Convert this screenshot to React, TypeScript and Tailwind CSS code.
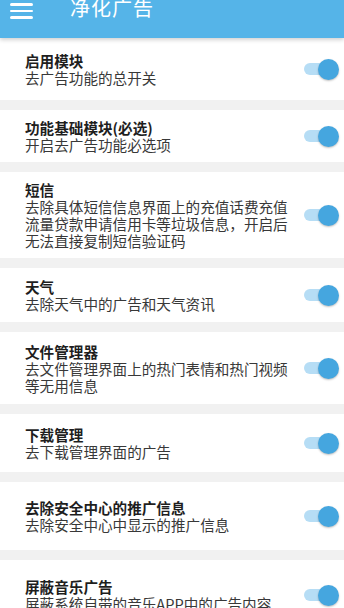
import React from 'react';

type Item = { title: string; desc: string[]; h: string };

const items: Item[] = [
  { title: '启用模块', desc: ['去广告功能的总开关'], h: 'h-[62px]' },
  { title: '功能基础模块(必选)', desc: ['开启去广告功能必选项'], h: 'h-[52px]' },
  {
    title: '短信',
    desc: ['去除具体短信信息界面上的充值话费充值', '流量贷款申请信用卡等垃圾信息，开启后', '无法直接复制短信验证码'],
    h: 'h-[86px]',
  },
  { title: '天气', desc: ['去除天气中的广告和天气资讯'], h: 'h-[54px]' },
  { title: '文件管理器', desc: ['去文件管理界面上的热门表情和热门视频', '等无用信息'], h: 'h-[72px]' },
  { title: '下载管理', desc: ['去下载管理界面的广告'], h: 'h-[58px]' },
  { title: '去除安全中心的推广信息', desc: ['去除安全中心中显示的推广信息'], h: 'h-[68px]' },
  { title: '屏蔽音乐广告', desc: ['屏蔽系统自带的音乐APP中的广告内容'], h: 'h-[70px]' },
];

function Toggle() {
  return (
    <div className="relative w-[35px] h-[22px] shrink-0 flex items-center">
      <div className="absolute left-0 right-[6px] h-[12px] rounded-full bg-[#b6ddf5]" />
      <div className="absolute right-0 w-[21px] h-[21px] rounded-full bg-[#45a6df] shadow-[0_1px_2px_rgba(0,0,0,0.25)]" />
    </div>
  );
}

export default function App() {
  return (
    <div
      className="w-[344px] h-[608px] overflow-hidden bg-[#f1f1f1]"
      style={{ fontFamily: '"Noto Sans CJK SC", "Noto Sans", sans-serif' }}
    >
      <header className="relative z-10 h-[38px] bg-[#55b4e8] flex items-start shadow-[0_2px_4px_rgba(0,0,0,0.18)]">
        <div className="ml-[10px] mt-[3px] w-[23px] flex flex-col gap-[4px]">
          <div className="h-[2.5px] bg-white rounded-sm" />
          <div className="h-[2.5px] bg-white rounded-sm" />
          <div className="h-[2.5px] bg-white rounded-sm" />
        </div>
        <h1 className="ml-[37px] -mt-[4px] text-[20px] leading-[24px] text-white tracking-[1px]">净化广告</h1>
      </header>
      <div className="flex flex-col gap-[10px]">
        {items.map((it) => (
          <div key={it.title} className={`${it.h} bg-white flex items-center pl-[25px] pr-[5px]`}>
            <div className="flex-1 min-w-0">
              <div className="text-[14.6px] leading-[17px] font-bold text-[#1e1e1e] whitespace-nowrap">{it.title}</div>
              {it.desc.map((d) => (
                <div key={d} className="text-[14.6px] leading-[17px] text-[#383838] whitespace-nowrap">{d}</div>
              ))}
            </div>
            <Toggle />
          </div>
        ))}
      </div>
    </div>
  );
}
